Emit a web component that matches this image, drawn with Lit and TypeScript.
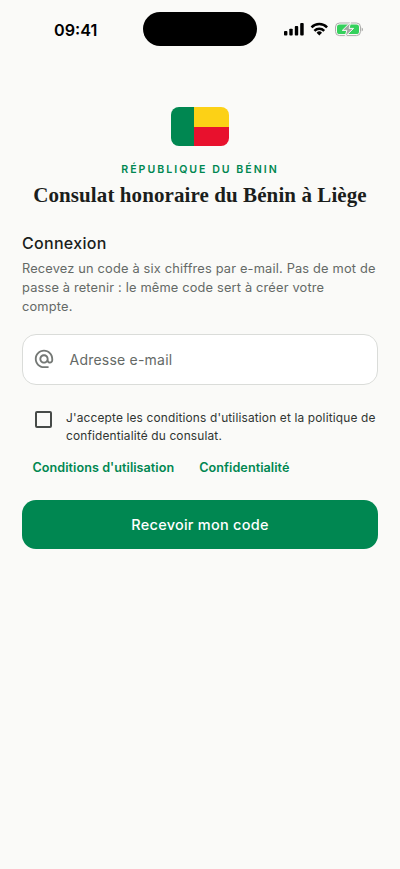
import { LitElement, html, css } from "lit";
import { customElement } from "lit/decorators.js";

@customElement("status-bar")
export class StatusBar extends LitElement {
  static styles = css`
    :host { display: grid; grid-template-columns: 143px 114px 1fr; height: 34px; padding-top: 12px; }
    .time { padding-left: 54px; font-size: 16.2px; font-weight: 600; line-height: 36px; color: #000; }
    .island { height: 34px; border-radius: 17px; background: #000; }
    .icons { display: flex; align-items: flex-start; padding: 10px 0 0 26px; }
    svg { display: block; }
  `;

  render() {
    return html`
      <div class="time">09:41</div>
      <div class="island"></div>
      <div class="icons">
        <svg width="82" height="16" viewBox="283 22 82 16">
          <rect x="284" y="31" width="3.4" height="4.4" rx=".9" />
          <rect x="289.3" y="28.7" width="3.4" height="6.7" rx=".9" />
          <rect x="294.8" y="26" width="3.4" height="9.4" rx=".9" />
          <rect x="300.2" y="23" width="3.5" height="12.4" rx=".9" />
          <g fill="none" stroke="#000" stroke-width="2.5">
            <path d="M311.5 27.3a11.1 11.1 0 0 1 15.6 0" />
            <path d="M314.4 30.8a6.9 6.9 0 0 1 9.8 0" />
          </g>
          <path d="M319.3 35.5l-2.7-2.8a3.8 3.8 0 0 1 5.4 0z" />
          <rect x="335.5" y="23" width="25" height="12.6" rx="4" fill="none" stroke="#adadab" stroke-width="1" />
          <path d="M361.6 27.4c1.9.6 1.9 3.4 0 4z" fill="#adadab" />
          <rect x="337" y="24.5" width="22" height="9.6" rx="2.6" fill="#34d15c" />
          <path d="M350.6 22.2l-8.3 8.2h4.5l-1.8 6.3 8.6-8.3h-4.5z" fill="#a4a7a4" stroke="#fafaf8" stroke-width="1" stroke-linejoin="round" />
        </svg>
      </div>
    `;
  }
}

@customElement("benin-flag")
export class BeninFlag extends LitElement {
  static styles = css`
    :host {
      display: grid; grid-template: 19.5px 1fr / 23px 1fr;
      width: 58px; height: 39px; border-radius: 8px; overflow: hidden;
    }
    .green { grid-row: 1 / 3; background: #008751; }
    .yellow { background: #fcd116; }
    .red { background: #e8112d; }
  `;

  render() {
    return html`<div class="green"></div><div class="yellow"></div><div class="red"></div>`;
  }
}

@customElement("app-root")
export class AppRoot extends LitElement {
  static styles = css`
    :host {
      display: block; height: 869px; overflow: hidden;
      background: #fafaf8; color: #1b1e1c; font-family: Inter, sans-serif;
    }
    main { display: flex; flex-direction: column; padding: 61px 22px 0; white-space: nowrap; }
    benin-flag { align-self: center; }
    .eyebrow {
      margin-top: 16px; text-align: center;
      font-size: 10.6px; line-height: 16px; font-weight: 600; letter-spacing: 2px; color: #008751;
    }
    h1 {
      margin: 4px 0 0; text-align: center;
      font: 700 21px/26px "Liberation Serif", serif; letter-spacing: .09px;
    }
    h2 { margin: 23px 0 0; font-size: 16px; line-height: 24px; font-weight: 500; letter-spacing: .3px; }
    .intro { margin: 4px 0 0; font-size: 12.8px; line-height: 19.2px; letter-spacing: .18px; color: #646966; }
    .field {
      display: flex; align-items: center; gap: 15px; box-sizing: border-box; height: 51px;
      margin-top: 17px; padding-left: 9.5px; border: 1px solid #dadcd9; border-radius: 14px; background: #fff;
      font-size: 14px; letter-spacing: .22px; color: #646966;
    }
    .field svg { fill: #747875; }
    .field span { padding-top: 1px; }
    .consent { display: flex; gap: 14px; margin: 24px 0 0 13px; }
    .box { box-sizing: border-box; width: 17px; height: 17px; margin-top: 2px; border: 2px solid #464a48; border-radius: 2px; }
    .terms { font-size: 11.9px; line-height: 18px; letter-spacing: .16px; color: #303532; }
    .links {
      display: flex; gap: 25px; margin: 13px 0 0 10.5px;
      font-size: 12.6px; line-height: 20px; font-weight: 600; letter-spacing: .06px; color: #008751;
    }
    .submit {
      height: 49px; margin-top: 22px; border: 0; border-radius: 14px; background: #008751; color: #fff;
      font: 500 14.5px/50px Inter, sans-serif; letter-spacing: .25px; padding: 0;
    }
  `;

  render() {
    return html`
      <status-bar></status-bar>
      <main>
        <benin-flag></benin-flag>
        <div class="eyebrow">RÉPUBLIQUE DU BÉNIN</div>
        <h1>Consulat honoraire du Bénin à Liège</h1>
        <h2>Connexion</h2>
        <p class="intro">
          Recevez un code à six chiffres par e-mail. Pas de mot de<br />passe à retenir : le même code sert à créer votre<br />compte.
        </p>
        <div class="field">
          <svg width="22" height="22" viewBox="0 0 24 24">
            <path d="M12 1.95c-5.52 0-10 4.48-10 10s4.48 10 10 10h5v-2h-5c-4.34 0-8-3.66-8-8s3.66-8 8-8 8 3.66 8 8v1.43c0 .79-.71 1.57-1.5 1.57s-1.5-.78-1.5-1.57v-1.43c0-2.76-2.24-5-5-5s-5 2.24-5 5 2.24 5 5 5c1.38 0 2.64-.56 3.54-1.47.65.89 1.77 1.47 2.96 1.47 1.97 0 3.5-1.6 3.5-3.57v-1.43c0-5.52-4.48-10-10-10zm0 13c-1.66 0-3-1.34-3-3s1.34-3 3-3 3 1.34 3 3-1.34 3-3 3z" />
          </svg>
          <span>Adresse e-mail</span>
        </div>
        <div class="consent">
          <div class="box"></div>
          <div class="terms">J'accepte les conditions d'utilisation et la politique de<br />confidentialité du consulat.</div>
        </div>
        <div class="links"><span>Conditions d'utilisation</span><span>Confidentialité</span></div>
        <button class="submit">Recevoir mon code</button>
      </main>
    `;
  }
}
